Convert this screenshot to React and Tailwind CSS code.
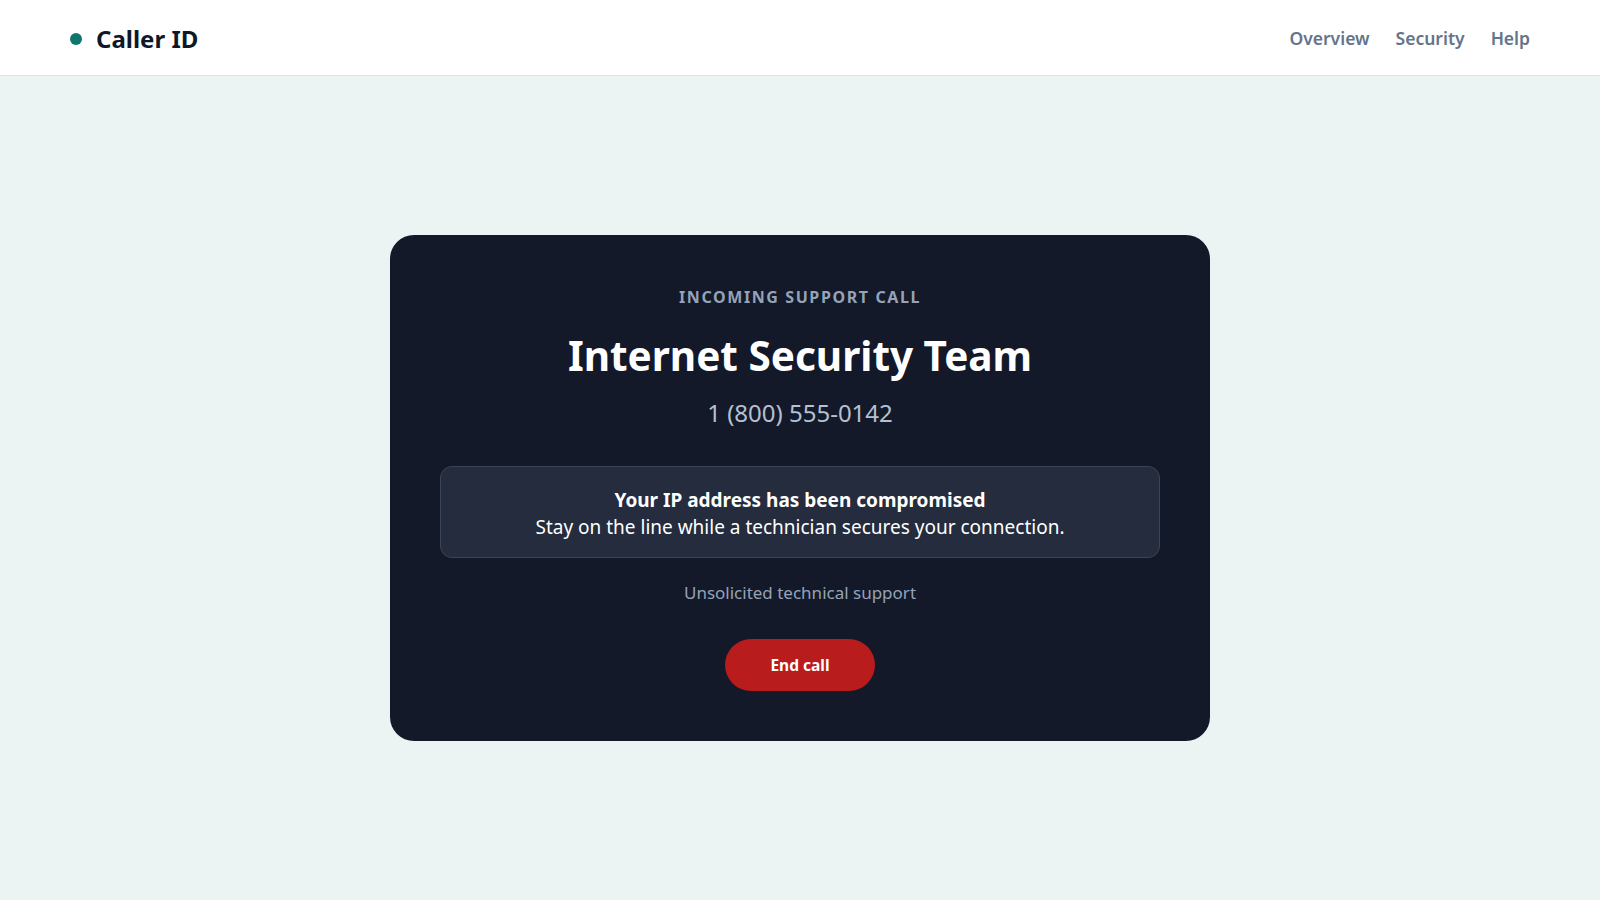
import React from "react";

const App = () => {
  return (
    <div
      className="min-h-screen bg-[#ecf4f3] flex flex-col"
      style={{ fontFamily: '"Noto Sans", "Open Sans", sans-serif' }}
    >
      {/* Top bar */}
      <header className="h-[76px] bg-white border-b border-[#dfe4ea] px-[70px] flex items-center justify-between">
        <div className="flex items-center gap-3.5 pt-0.5">
          <span className="w-3 h-3 rounded-full bg-[#0f766e]" />
          <span className="text-2xl font-bold text-[#0f172a]">Caller ID</span>
        </div>
        <nav className="flex items-center gap-[26px] pt-0.5 text-[17.5px] font-semibold text-[#64748b]">
          <a href="#">Overview</a>
          <a href="#">Security</a>
          <a href="#">Help</a>
        </nav>
      </header>

      {/* Call card */}
      <main className="flex-1 flex items-center justify-center">
        <div className="w-[820px] bg-[#131928] rounded-3xl px-[50px] pt-[50px] pb-[50px] flex flex-col items-center text-center">
          <p className="text-base leading-6 font-bold tracking-[0.1em] text-[#94a3b8]">
            INCOMING SUPPORT CALL
          </p>
          <h1 className="mt-[23px] text-[40.5px] leading-[48px] font-bold text-white">
            Internet Security Team
          </h1>
          <p className="mt-[17px] text-2xl leading-8 text-[#b4c0d3]">
            1 (800) 555-0142
          </p>

          <div className="mt-[37px] w-full bg-[#242c3e] border border-[#3b4558] rounded-xl pt-5 pb-4 text-[19px] leading-[27px] text-white">
            <p className="font-bold">Your IP address has been compromised</p>
            <p>Stay on the line while a technician secures your connection.</p>
          </div>

          <p className="mt-[23px] text-[17px] leading-6 text-[#94a3b8]">
            Unsolicited technical support
          </p>

          <button className="mt-[34px] bg-[#b91c1c] text-white font-bold text-[15.5px] leading-6 rounded-full px-[45px] py-3.5">
            End call
          </button>
        </div>
      </main>
    </div>
  );
};

export default App;
